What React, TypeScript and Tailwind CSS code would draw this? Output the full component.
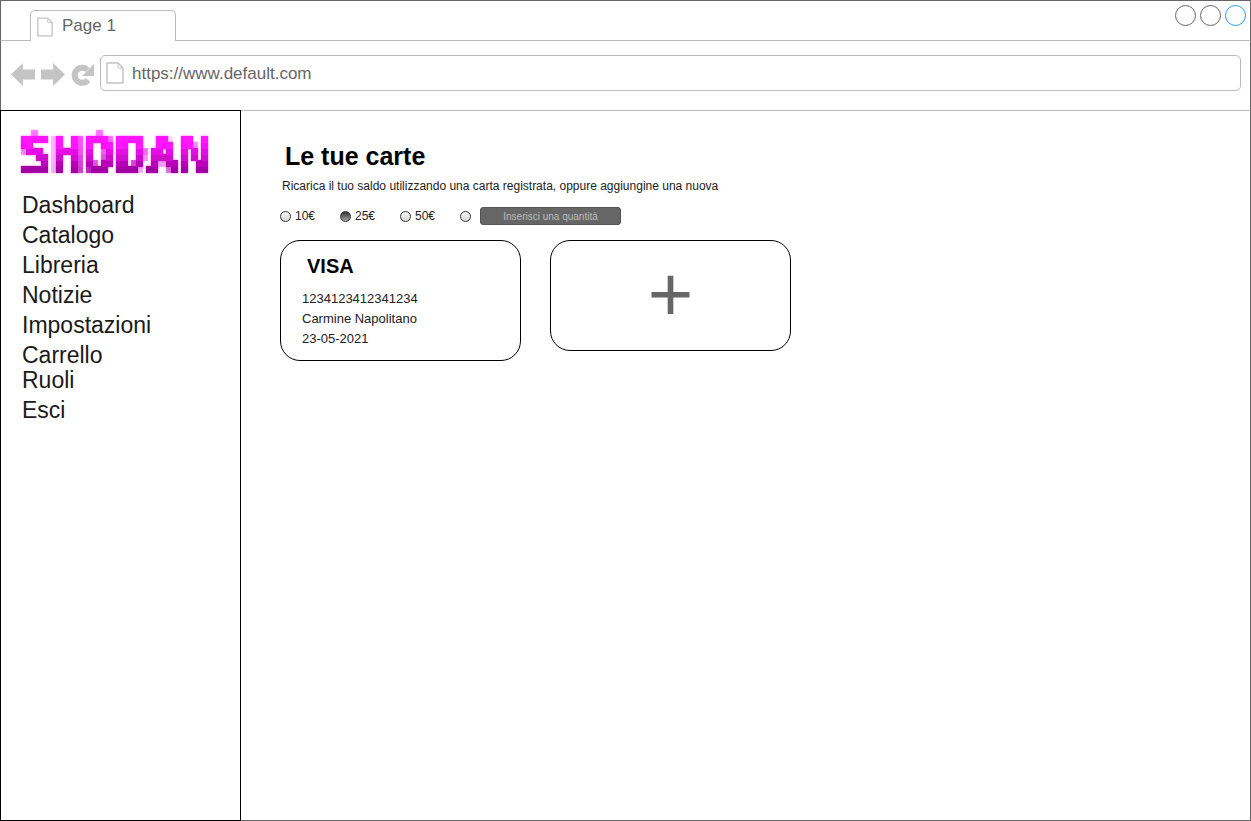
const navItems = ["Dashboard", "Catalogo", "Libreria", "Notizie", "Impostazioni", "Carrello"];
const lowerItems = ["Ruoli", "Esci"];
const amounts = [
  { label: "10€", checked: false },
  { label: "25€", checked: true },
  { label: "50€", checked: false },
];

function PageIcon({ className }: { className: string }) {
  return (
    <svg className={className} viewBox="0 0 18 22" fill="none">
      <path d="M1 1H12L17 6V21H1Z" fill="#fff" stroke="#c4c4c4" strokeWidth="1.5" strokeLinejoin="round" />
      <path d="M12 1V6H17" stroke="#c4c4c4" strokeWidth="1" />
    </svg>
  );
}

function NavIcons() {
  return (
    <div className="flex items-center gap-[6px] ml-[10px] w-[89px]">
      <svg width="24" height="25" viewBox="0 0 24 25" fill="#c4c4c4">
        <path d="M0 12.5L12 1V7.5H24V17.5H12V24Z" />
      </svg>
      <svg width="24" height="25" viewBox="0 0 24 25" fill="#c4c4c4">
        <path d="M24 12.5L12 1V7.5H0V17.5H12V24Z" />
      </svg>
      <svg width="23" height="24" viewBox="0 0 23 24" fill="none">
        <path d="M17 17A7.5 7.5 0 1 1 16.5 7" stroke="#c4c4c4" strokeWidth="6" />
        <path d="M23 1V13H11Z" fill="#c4c4c4" />
      </svg>
    </div>
  );
}

function Radio({ checked }: { checked: boolean }) {
  return (
    <span
      className={
        checked
          ? "block w-[11px] h-[11px] rounded-full border border-[#333] bg-linear-to-b from-[#333] to-[#aaa]"
          : "block w-[11px] h-[11px] rounded-full border border-[#333] bg-linear-to-b from-[#f6f6f6] to-[#d8d8d8]"
      }
    />
  );
}

export default function App() {
  return (
    <div className="w-[1251px] h-[821px] flex flex-col bg-white font-['Liberation_Sans',Arial,sans-serif]">
      {/* blocky look for the logo text */}
      <svg width="0" height="0" className="absolute">
        <filter id="pixelate" x="0" y="0" width="1" height="1">
          <feFlood x="2" y="3" width="1" height="1" />
          <feComposite width="5" height="6" />
          <feTile result="grid" />
          <feComposite in="SourceGraphic" in2="grid" operator="in" />
          <feMorphology operator="dilate" radius="3 3" />
        </filter>
      </svg>

      {/* browser chrome */}
      <div className="h-[41px] flex items-end border border-[#666] border-b-[#bbb] pl-[29px]">
        <div className="w-[146px] h-[31px] -mb-px flex items-center bg-white border border-b-0 border-[#bbb] rounded-t-[5px] pl-[6px]">
          <PageIcon className="w-[16px] h-[20px] mt-[2px]" />
          <span className="ml-[9px] text-[17px] text-[#666]">Page 1</span>
        </div>
        <div className="ml-auto self-start mt-[4px] mr-[4px] flex gap-[4px]">
          <span className="w-[21px] h-[21px] rounded-full border border-[#666]" />
          <span className="w-[21px] h-[21px] rounded-full border border-[#666]" />
          <span className="w-[21px] h-[21px] rounded-full border border-[#2a96ff]" />
        </div>
      </div>
      <div className="h-[69px] flex items-start pt-[14px] border-x border-[#666]">
        <div className="mt-[7px]">
          <NavIcons />
        </div>
        <div className="w-[1141px] h-[36px] flex items-center border border-[#bbb] rounded-[5px] pl-[5px]">
          <PageIcon className="w-[18px] h-[22px]" />
          <span className="ml-[8px] mt-[2px] text-[17px] text-[#666]">https://www.default.com</span>
        </div>
      </div>

      <div className="flex-1 flex min-h-0">
        {/* sidebar */}
        <aside className="w-[241px] border border-black pl-[21px] pt-[19px] text-[#1a1a1a] text-[23px] leading-[30px]">
          <div className="w-[186px] h-[50px] flex items-center justify-center [filter:drop-shadow(0_0_1px_#ff66ff)_blur(0.4px)]">
            <span className="font-['DejaVu_Sans_Mono',monospace] font-bold text-[53px] leading-[50px] w-[196px] shrink-0 text-center bg-linear-to-b from-[#ff12ff] from-30% to-[#a000a0] to-80% bg-clip-text text-transparent [filter:url(#pixelate)]">
              SHODAN
            </span>
          </div>
          <nav className="mt-[10px]">
            {navItems.map((item) => (
              <div key={item}>{item}</div>
            ))}
            <div className="-mt-[5px]">
              {lowerItems.map((item) => (
                <div key={item}>{item}</div>
              ))}
            </div>
          </nav>
        </aside>

        {/* main */}
        <main className="flex-1 border-t border-t-[#bbb] border-r border-b border-r-[#666] border-b-[#666] pl-[39px] pt-[30px] text-black">
          <h1 className="ml-[5px] text-[25px] leading-[30px] font-bold">Le tue carte</h1>
          <p className="ml-[2px] mt-[7px] text-[12px] leading-[16px] text-[#222]">
            Ricarica il tuo saldo utilizzando una carta registrata, oppure aggiungine una nuova
          </p>
          <div className="mt-[13px] h-[18px] flex items-center text-[12px] text-[#222]">
            {amounts.map((a) => (
              <label key={a.label} className="w-[60px] flex items-center gap-[4px]">
                <Radio checked={a.checked} />
                {a.label}
              </label>
            ))}
            <Radio checked={false} />
            <div className="ml-[9px] w-[141px] h-[18px] rounded-[3px] bg-[#666] border border-[#555] flex items-center justify-center text-[10px] text-[#bbb]">
              Inserisci una quantità
            </div>
          </div>
          <div className="mt-[15px] flex items-start gap-[29px]">
            <div className="w-[241px] h-[121px] rounded-[20px] border border-black pl-[21px] pt-[13px]">
              <div className="ml-[5px] text-[20px] leading-[24px] font-bold">VISA</div>
              <div className="mt-[11px] text-[13px] leading-[20px] text-[#222]">
                <div>1234123412341234</div>
                <div>Carmine Napolitano</div>
                <div>23-05-2021</div>
              </div>
            </div>
            <div className="w-[241px] h-[111px] rounded-[20px] border border-black flex items-center justify-center">
              <span className="text-[78px] leading-none text-[#666] -mt-[4px]">+</span>
            </div>
          </div>
        </main>
      </div>
    </div>
  );
}
